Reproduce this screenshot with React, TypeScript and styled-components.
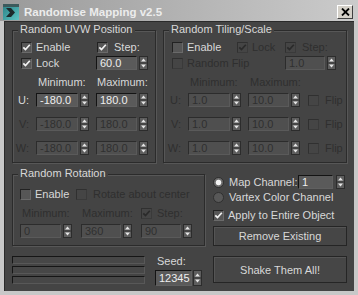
import { Fragment, ReactNode } from "react";
import styled, { createGlobalStyle } from "styled-components";

const LIGHT = "#d8d8d8";
const DIM = "#2f2f2f";

const GlobalStyle = createGlobalStyle`
  html, body {
    margin: 0;
    padding: 0;
    background: #c8c8c8;
  }
  body {
    font-family: "Liberation Sans", Arial, sans-serif;
    font-size: 11px;
  }
`;

const Window = styled.div`
  width: 358px;
  height: 295px;
  display: flex;
  flex-direction: column;
  background: #c8c8c8;
`;

const TitleBar = styled.div`
  height: 21px;
  flex: none;
  box-sizing: border-box;
  display: flex;
  align-items: center;
  padding: 2px 5px 0 3px;
  background: linear-gradient(to right, #9a9a9a, #cbcbcb);
`;

const Title = styled.span`
  flex: 1;
  margin-left: 5px;
  font-size: 11.5px;
  font-weight: bold;
  color: #ececec;
  white-space: nowrap;
`;

const CloseButton = styled.div`
  width: 16px;
  height: 14px;
  box-sizing: border-box;
  background: #d4d0c8;
  border: 1px solid;
  border-color: #ffffff #404040 #404040 #ffffff;
  display: flex;
  align-items: center;
  justify-content: center;
`;

const Frame = styled.div`
  flex: 1;
  display: flex;
  padding: 0 4px 4px 4px;
`;

const Body = styled.div`
  flex: 1;
  background: #444444;
  box-shadow: inset 1px 1px 0 #2a2a2a;
  padding: 9px 7px 0 8px;
  display: flex;
  flex-direction: column;
`;

const TopRow = styled.div`
  display: flex;
  gap: 7px;
`;

const MidRow = styled.div`
  display: flex;
  gap: 7px;
  margin-top: 11px;
  align-items: flex-start;
`;

const Column = styled.div<{ $w: number; $top?: number; $left?: number }>`
  width: ${(p) => p.$w}px;
  margin-top: ${(p) => p.$top ?? 0}px;
  padding-left: ${(p) => p.$left ?? 0}px;
  box-sizing: border-box;
  display: flex;
  flex-direction: column;
`;

const Group = styled.div<{ $w: number; $h: number; $padTop: number }>`
  position: relative;
  box-sizing: border-box;
  width: ${(p) => p.$w}px;
  height: ${(p) => p.$h}px;
  border: 1px solid #2b2b2b;
  box-shadow: 1px 1px 0 #575757, inset 1px 1px 0 #575757;
  padding-top: ${(p) => p.$padTop}px;
  display: flex;
  flex-direction: column;
`;

const GroupTitle = styled.span`
  position: absolute;
  top: -8px;
  left: 5px;
  padding: 0 2px;
  background: #444444;
  color: ${LIGHT};
  line-height: 13px;
  white-space: nowrap;
`;

const Row = styled.div<{ $top?: number; $left?: number }>`
  display: flex;
  align-items: center;
  height: 14px;
  margin-top: ${(p) => p.$top ?? 0}px;
  padding-left: ${(p) => p.$left ?? 0}px;
`;

const Cell = styled.div<{ $w: number }>`
  width: ${(p) => p.$w}px;
  flex: none;
  display: flex;
  align-items: center;
`;

const SpinGrid = styled.div<{ $cols: string; $top: number; $gap?: number }>`
  display: grid;
  grid-template-columns: ${(p) => p.$cols};
  column-gap: ${(p) => p.$gap ?? 7}px;
  row-gap: 10px;
  grid-auto-rows: 14px;
  align-items: center;
  margin-top: ${(p) => p.$top}px;
`;

const Label = styled.span<{ $disabled?: boolean; $pad?: number; $right?: boolean }>`
  color: ${(p) => (p.$disabled ? DIM : LIGHT)};
  line-height: 14px;
  white-space: nowrap;
  padding-left: ${(p) => p.$pad ?? 0}px;
  text-align: ${(p) => (p.$right ? "right" : "left")};
`;

const CheckWrap = styled.span<{ $gap: number }>`
  display: inline-flex;
  align-items: center;
  gap: ${(p) => p.$gap}px;
`;

const CheckBoxBox = styled.span<{ $disabled?: boolean }>`
  flex: none;
  width: 11px;
  height: 11px;
  box-sizing: border-box;
  border: 1px solid;
  border-color: ${(p) =>
    p.$disabled ? "#303030 #3a3a3a #3a3a3a #303030" : "#222222 #6a6a6a #6a6a6a #222222"};
  background: ${(p) => (p.$disabled ? "#454545" : "#565656")};
  display: flex;
  align-items: center;
  justify-content: center;
`;

const RadioDot = styled.span<{ $on?: boolean }>`
  flex: none;
  width: 11px;
  height: 11px;
  box-sizing: border-box;
  border-radius: 50%;
  border: 1px solid #303030;
  background: ${(p) =>
    p.$on ? "radial-gradient(circle, #f4f4f4 0 2.4px, #6e6e6e 3.2px)" : "#585858"};
`;

const Edit = styled.div<{ $w: number; $h: number; $disabled?: boolean }>`
  width: ${(p) => p.$w}px;
  height: ${(p) => p.$h}px;
  box-sizing: border-box;
  border: 1px solid;
  border-color: ${(p) =>
    p.$disabled ? "#2c2c2c #5a5a5a #5a5a5a #2c2c2c" : "#141414 #606060 #606060 #141414"};
  background: ${(p) => (p.$disabled ? "#4f4f4f" : "#5a5a5a")};
  color: ${(p) => (p.$disabled ? DIM : "#eeeeee")};
  padding-left: 3px;
  line-height: ${(p) => p.$h - 2}px;
  white-space: nowrap;
  overflow: hidden;
`;

const SpinWrap = styled.div<{ $gap: number }>`
  display: flex;
  gap: ${(p) => p.$gap}px;
`;

const ArrowBox = styled.span<{ $h: number }>`
  width: 9px;
  height: ${(p) => p.$h}px;
  flex: none;
  display: block;
  background: #5e5e5e;
`;

const ProgressStack = styled.div`
  display: flex;
  flex-direction: column;
  gap: 2px;
  margin-top: 2px;
`;

const ProgressBar = styled.div`
  width: 133px;
  height: 8px;
  box-sizing: border-box;
  border: 1px solid;
  border-color: #161616 #585858 #585858 #161616;
  background: #474747;
`;

const BottomRow = styled.div`
  display: flex;
  gap: 10px;
  margin-top: 8px;
  align-items: flex-start;
`;

const SeedColumn = styled.div`
  display: flex;
  flex-direction: column;
  gap: 2px;
`;

const Button = styled.div<{ $h: number; $top: number }>`
  height: ${(p) => p.$h}px;
  margin-top: ${(p) => p.$top}px;
  box-sizing: border-box;
  border: 1px solid #252525;
  box-shadow: inset 1px 1px 0 #555555;
  background: #464646;
  color: ${LIGHT};
  display: flex;
  align-items: center;
  justify-content: center;
`;

const AppIcon = () => (
  <svg width="16" height="16" viewBox="0 0 16 16">
    <defs>
      <linearGradient id="ic" x1="0" y1="0" x2="1" y2="1">
        <stop offset="0" stopColor="#2b7f84" />
        <stop offset="1" stopColor="#5cc4c4" />
      </linearGradient>
    </defs>
    <rect x="0" y="0" width="16" height="16" fill="url(#ic)" />
    <rect x="0" y="0" width="16" height="3" fill="#3c5a5c" />
    <polygon points="3,4 8,4 12,8.5 8,13 3,13 7,8.5" fill="#1d2a2c" />
  </svg>
);

const Arrows = ({ h = 14 }: { h?: number }) => {
  const mid = h / 2;
  return (
    <ArrowBox $h={h}>
      <svg width="9" height={h} viewBox={`0 0 9 ${h}`}>
        <rect x="0.5" y="0.5" width="8" height={h - 1} fill="none" stroke="#2c2c2c" />
        <line x1="1" y1={mid} x2="8" y2={mid} stroke="#2c2c2c" />
        <polygon points={`2,${mid - 1.5} 7,${mid - 1.5} 4.5,${mid - 4.5}`} fill="#e6e6e6" />
        <polygon points={`2,${mid + 1.5} 7,${mid + 1.5} 4.5,${mid + 4.5}`} fill="#e6e6e6" />
      </svg>
    </ArrowBox>
  );
};

const Spinner = ({
  value,
  w,
  h = 14,
  gap = 2,
  disabled,
}: {
  value: string;
  w: number;
  h?: number;
  gap?: number;
  disabled?: boolean;
}) => (
  <SpinWrap $gap={gap}>
    <Edit $w={w} $h={h} $disabled={disabled}>
      {value}
    </Edit>
    <Arrows h={h} />
  </SpinWrap>
);

const Check = ({
  label,
  checked,
  disabled,
  gap = 4,
}: {
  label?: ReactNode;
  checked?: boolean;
  disabled?: boolean;
  gap?: number;
}) => (
  <CheckWrap $gap={gap}>
    <CheckBoxBox $disabled={disabled}>
      {checked && (
        <svg width="9" height="9" viewBox="0 0 9 9">
          <polyline
            points="1.3,4.3 3.5,6.6 7.8,1.8"
            fill="none"
            stroke={disabled ? "#2a2a2a" : "#f2f2f2"}
            strokeWidth="1.7"
          />
        </svg>
      )}
    </CheckBoxBox>
    {label && <Label $disabled={disabled}>{label}</Label>}
  </CheckWrap>
);

const Radio = ({ label, on }: { label: string; on?: boolean }) => (
  <CheckWrap $gap={5}>
    <RadioDot $on={on} />
    <Label>{label}</Label>
  </CheckWrap>
);

const axes = ["U", "V", "W"];

export default function App() {
  return (
    <>
      <GlobalStyle />
      <Window>
        <TitleBar>
          <AppIcon />
          <Title>Randomise Mapping v2.5</Title>
          <CloseButton>
            <svg width="9" height="8" viewBox="0 0 9 8">
              <path d="M1 0.5 L8 7.5 M8 0.5 L1 7.5" stroke="#000" strokeWidth="1.8" />
            </svg>
          </CloseButton>
        </TitleBar>
        <Frame>
          <Body>
            <TopRow>
              <Group $w={144} $h={133} $padTop={9}>
                <GroupTitle>Random UVW Position</GroupTitle>
                <Row $left={8}>
                  <Cell $w={76}>
                    <Check label="Enable" checked />
                  </Cell>
                  <Check label="Step:" checked gap={6} />
                </Row>
                <Row $left={8} $top={2}>
                  <Cell $w={75}>
                    <Check label="Lock" checked />
                  </Cell>
                  <Spinner value="60.0" w={41} />
                </Row>
                <SpinGrid $cols="16px 53px 53px" $top={5}>
                  <span />
                  <Label $pad={2}>Minimum:</Label>
                  <Label $pad={1}>Maximum:</Label>
                </SpinGrid>
                <SpinGrid $cols="16px 53px 53px" $top={4}>
                  {axes.map((a, i) => (
                    <Fragment key={a}>
                      <Label $right $disabled={i > 0}>
                        {a}:
                      </Label>
                      <Spinner value="-180.0" w={42} disabled={i > 0} />
                      <Spinner value="180.0" w={41} disabled={i > 0} />
                    </Fragment>
                  ))}
                </SpinGrid>
              </Group>

              <Group $w={184} $h={133} $padTop={9}>
                <GroupTitle>Random Tiling/Scale</GroupTitle>
                <Row $left={8}>
                  <Cell $w={65}>
                    <Check label="Enable" />
                  </Cell>
                  <Cell $w={48}>
                    <Check label="Lock" checked disabled />
                  </Cell>
                  <Check label="Step:" checked disabled gap={6} />
                </Row>
                <Row $left={8} $top={2}>
                  <Cell $w={113}>
                    <Check label="Random Flip" disabled />
                  </Cell>
                  <Spinner value="1.0" w={40} disabled />
                </Row>
                <SpinGrid $cols="17px 53px 53px auto" $top={5}>
                  <span />
                  <Label $pad={2} $disabled>
                    Minimum:
                  </Label>
                  <Label $pad={2} $disabled>
                    Maximum:
                  </Label>
                  <span />
                </SpinGrid>
                <SpinGrid $cols="17px 53px 53px auto" $top={4}>
                  {axes.map((a) => (
                    <Fragment key={a}>
                      <Label $right $disabled>
                        {a}:
                      </Label>
                      <Spinner value="1.0" w={42} disabled />
                      <Spinner value="10.0" w={41} disabled />
                      <Check label="Flip" disabled gap={6} />
                    </Fragment>
                  ))}
                </SpinGrid>
              </Group>
            </TopRow>

            <MidRow>
              <Column $w={193}>
                <Group $w={193} $h={72} $padTop={12}>
                  <GroupTitle>Random Rotation</GroupTitle>
                  <Row $left={7}>
                    <Cell $w={56}>
                      <Check label="Enable" />
                    </Cell>
                    <Check label="Rotate about center" disabled gap={6} />
                  </Row>
                  <Row $left={7} $top={5}>
                    <Cell $w={61}>
                      <Label $pad={2} $disabled>
                        Minimum:
                      </Label>
                    </Cell>
                    <Cell $w={60}>
                      <Label $pad={1} $disabled>
                        Maximum:
                      </Label>
                    </Cell>
                    <Check label="Step:" checked disabled gap={5} />
                  </Row>
                  <Row $left={7} $top={4}>
                    <Cell $w={61}>
                      <Spinner value="0" w={41} disabled />
                    </Cell>
                    <Cell $w={60}>
                      <Spinner value="360" w={40} disabled />
                    </Cell>
                    <Spinner value="90" w={40} disabled />
                  </Row>
                </Group>
                <BottomRow>
                  <ProgressStack>
                    <ProgressBar />
                    <ProgressBar />
                    <ProgressBar />
                  </ProgressStack>
                  <SeedColumn>
                    <Label $pad={2}>Seed:</Label>
                    <Spinner value="12345" w={37} h={16} gap={1} />
                  </SeedColumn>
                </BottomRow>
              </Column>

              <Column $w={135} $top={1} $left={1}>
                <Row>
                  <Cell $w={85}>
                    <Radio label="Map Channel:" on />
                  </Cell>
                  <Spinner value="1" w={35} gap={3} />
                </Row>
                <Row $top={1}>
                  <Radio label="Vartex Color Channel" />
                </Row>
                <Row $top={4}>
                  <Check label="Apply to Entire Object" checked />
                </Row>
                <Button $h={20} $top={4}>
                  Remove Existing
                </Button>
                <Button $h={27} $top={10}>
                  Shake Them All!
                </Button>
              </Column>
            </MidRow>
          </Body>
        </Frame>
      </Window>
    </>
  );
}
